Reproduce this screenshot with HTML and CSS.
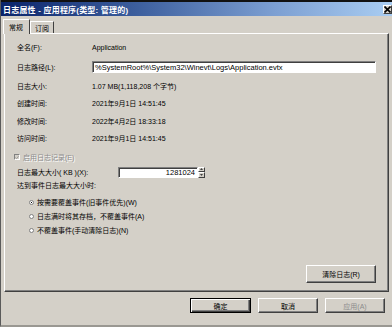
FILE: index.html
```html
<!DOCTYPE html>
<html lang="zh-CN">
<head>
<meta charset="utf-8">
<title>日志属性</title>
<link rel="stylesheet" href="styles.css">
</head>
<body>
<div class="window">
  <div class="titlebar">
    <span class="title">日志属性 - 应用程序(类型: 管理的)</span>
    <span class="close"><svg width="7" height="7" viewBox="0 0 7 7"><path d="M0.5 0.5 L6.5 6.5 M6.5 0.5 L0.5 6.5" stroke="#000" stroke-width="1.6"/></svg></span>
  </div>
  <div class="tabs">
    <div class="tab active">常规</div>
    <div class="tab">订阅</div>
  </div>
  <div class="panel">
    <div class="row r-a"><span class="label">全名(F):</span><span class="value">Application</span></div>
    <div class="row r-a"><span class="label">日志路径(L):</span><span class="field path">%SystemRoot%\System32\Winevt\Logs\Application.evtx</span></div>
    <div class="row r-b"><span class="label">日志大小:</span><span class="value">1.07 MB(1,118,208 个字节)</span></div>
    <div class="row r-b"><span class="label">创建时间:</span><span class="value">2021年9月1日 14:51:45</span></div>
    <div class="row r-b"><span class="label">修改时间:</span><span class="value">2022年4月2日 18:33:18</span></div>
    <div class="row r-b"><span class="label">访问时间:</span><span class="value">2021年9月1日 14:51:45</span></div>
    <div class="check-row"><span class="checkbox"><svg width="5" height="5" viewBox="0 0 5 5"><path d="M0.5 2.5 L2 4 L4.5 0.8" stroke="#9a9a9a" stroke-width="1.2" fill="none"/></svg></span><span class="disabled">启用日志记录(E)</span></div>
    <div class="size-row"><span class="label wide">日志最大大小( KB )(X):</span><span class="field num">1281024</span><span class="spin"><span class="spin-btn"><svg width="3" height="2" viewBox="0 0 3 2"><path d="M0 2 L1.5 0 L3 2Z" fill="#404040"/></svg></span><span class="spin-btn"><svg width="3" height="2" viewBox="0 0 3 2"><path d="M0 0 L1.5 2 L3 0Z" fill="#404040"/></svg></span></span></div>
    <div class="reach">达到事件日志最大大小时:</div>
    <div class="radios">
      <div class="radio-row"><span class="radio checked"></span>按需要覆盖事件(旧事件优先)(W)</div>
      <div class="radio-row"><span class="radio"></span>日志满时将其存档，不覆盖事件(A)</div>
      <div class="radio-row"><span class="radio"></span>不覆盖事件(手动清除日志)(N)</div>
    </div>
    <div class="panel-actions"><button class="btn clear">清除日志(R)</button></div>
  </div>
  <div class="footer">
    <button class="btn default">确定</button>
    <button class="btn">取消</button>
    <button class="btn disabled-btn">应用(A)</button>
  </div>
</div>
</body>
</html>
```
FILE: styles.css
```css
* { box-sizing: border-box; }
html, body { margin: 0; padding: 0; }
body {
  width: 392px;
  height: 327px;
  overflow: hidden;
  background: #d4d0c8;
  font-family: "Liberation Sans", "Noto Sans CJK SC", sans-serif;
  font-size: 7px;
  color: #000;
}
.window {
  width: 392px;
  height: 327px;
  display: flex;
  flex-direction: column;
  background: #d4d0c8;
  border-left: 1px solid #5a5a5a;
  border-bottom: 2px solid #9a9892;
}
.titlebar {
  height: 16px;
  border-top: 2px solid #111;
  background: linear-gradient(to right, #0a246a 0%, #3d5f9e 35%, #7c9fd2 70%, #a9cdf2 100%);
  display: flex;
  align-items: center;
  justify-content: space-between;
  padding: 0 0 0 2px;
}
.title {
  color: #fff;
  font-weight: bold;
  font-size: 8px;
  letter-spacing: 0.2px;
}
.close {
  width: 9px;
  height: 9px;
  background: #d4d0c8;
  border: 1px solid;
  border-color: #fff #404040 #404040 #fff;
  display: flex;
  align-items: center;
  justify-content: center;
}
.tabs {
  display: flex;
  align-items: flex-end;
  height: 17px;
  padding-left: 2px;
}
.tab {
  height: 12px;
  padding: 0 4px;
  display: flex;
  align-items: center;
  border: 1px solid;
  border-color: #fff #404040 transparent #fff;
  border-bottom: none;
  font-size: 7px;
}
.tab.active {
  height: 15px;
  padding: 0 6px 0 5px;
  margin-bottom: -1px;
  background: #d4d0c8;
  position: relative;
  z-index: 1;
}
.panel {
  margin: 0 3px 0 3px;
  height: 259px;
  border: 1px solid;
  border-color: #fff #404040 #404040 #fff;
  box-shadow: inset -1px -1px 0 #808080;
  padding: 3px 0 0 12px;
  display: flex;
  flex-direction: column;
}
.row {
  display: flex;
  align-items: center;
}
.r-a { height: 20px; }
.r-b { height: 17.5px; }
.label { width: 75px; flex: none; }
.label.wide { width: 101px; }
.field {
  background: #fff;
  border: 1px solid;
  border-color: #808080 #fff #fff #808080;
  box-shadow: inset 1px 1px 0 #404040;
  height: 12px;
  display: flex;
  align-items: center;
  font-size: 7.5px;
}
.path {
  width: 284px;
  padding-left: 2px;
}
.check-row {
  display: flex;
  align-items: center;
  height: 16px;
  margin-top: 2px;
  margin-left: -3px;
}
.checkbox {
  width: 6px;
  height: 6px;
  background: #d4d0c8;
  border: 1px solid;
  border-color: #808080 #fff #fff #808080;
  margin-right: 3px;
  display: flex;
  align-items: center;
  justify-content: center;
}
.disabled {
  color: #8c8c8c;
  text-shadow: 1px 1px 0 #fff;
}
.size-row {
  display: flex;
  align-items: center;
  height: 14px;
}
.num {
  width: 80px;
  justify-content: flex-end;
  padding-right: 2px;
  height: 11px;
}
.spin {
  display: flex;
  flex-direction: column;
  width: 7px;
  height: 11px;
}
.spin-btn {
  flex: 1;
  background: #d4d0c8;
  border: 1px solid;
  border-color: #fff #404040 #404040 #fff;
  display: flex;
  align-items: center;
  justify-content: center;
}
.reach {
  height: 12px;
  display: flex;
  align-items: center;
}
.radios {
  margin-top: 4px;
  padding-left: 12px;
  display: flex;
  flex-direction: column;
}
.radio-row {
  height: 14px;
  display: flex;
  align-items: center;
}
.radio {
  width: 5px;
  height: 5px;
  border-radius: 50%;
  background: #fff;
  border: 1px solid #808080;
  margin-right: 3px;
  position: relative;
}
.radio.checked::after {
  content: "";
  position: absolute;
  left: 1px;
  top: 1px;
  width: 1px;
  height: 1px;
  background: #000;
}
.panel-actions {
  margin-top: auto;
  margin-bottom: 8px;
  display: flex;
  justify-content: flex-end;
  padding-right: 12px;
}
.btn {
  font-family: "Liberation Sans", "Noto Sans CJK SC", sans-serif;
  font-size: 7px;
  color: #000;
  background: #d4d0c8;
  border: 1px solid;
  border-color: #fff #404040 #404040 #fff;
  box-shadow: inset -1px -1px 0 #808080;
  padding: 0;
  margin: 0;
}
.clear {
  width: 70px;
  height: 18px;
}
.footer {
  display: flex;
  justify-content: flex-end;
  gap: 7px;
  padding: 6px 7px 0 0;
}
.footer .btn {
  width: 60px;
  height: 15px;
}
.footer .default {
  width: 61px;
  border: 1px solid #000;
  box-shadow: inset 1px 1px 0 #fff, inset -1px -1px 0 #404040, inset -2px -2px 0 #808080;
}
.disabled-btn {
  color: #8c8c8c;
}
```
